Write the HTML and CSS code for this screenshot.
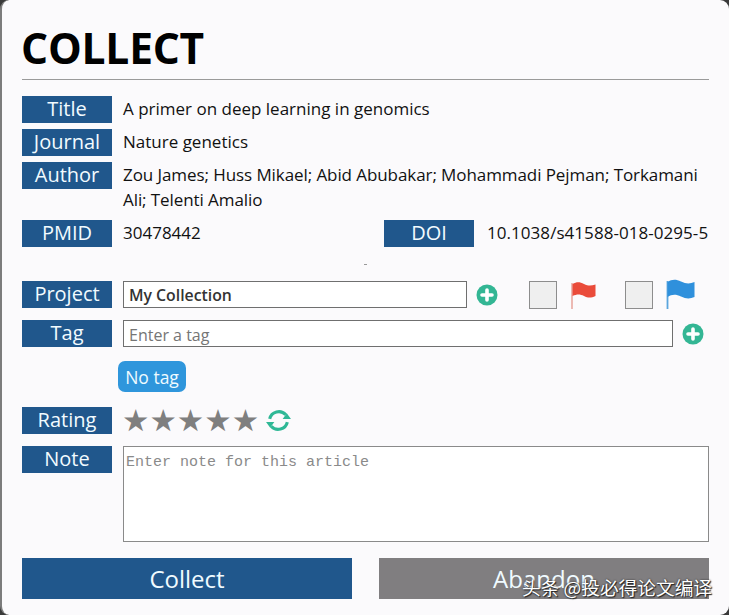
FILE: index.html
```html
<!DOCTYPE html>
<html lang="en">
<head>
<meta charset="utf-8">
<title>Collect</title>
<link rel="stylesheet" href="styles.css">
</head>
<body>
<main class="panel">
  <h1 class="heading">COLLECT</h1>
  <hr class="rule">
  <div class="row row-first"><span class="label">Title</span><span class="value">A primer on deep learning in genomics</span></div>
  <div class="row"><span class="label">Journal</span><span class="value">Nature genetics</span></div>
  <div class="row"><span class="label">Author</span><span class="value value-wrap">Zou James; Huss Mikael; Abid Abubakar; Mohammadi Pejman; Torkamani Ali; Telenti Amalio</span></div>
  <div class="row row-ids">
    <span class="label">PMID</span><span class="value value-pmid">30478442</span>
    <span class="label">DOI</span><span class="value value-doi">10.1038/s41588-018-0295-5</span>
  </div>
  <span class="speck"></span>
  <div class="row row-project">
    <span class="label">Project</span>
    <div class="select-box">My Collection</div>
    <svg class="plus" viewBox="0 0 22 22"><circle cx="11" cy="11" r="10.5" fill="#33b694"/><path d="M11 6v10M6 11h10" stroke="#fff" stroke-width="3.6" stroke-linecap="round"/></svg>
    <span class="check check-red"></span>
    <svg class="flag flag-red" viewBox="0 0 26 28"><path d="M1 2v26" stroke="#e9a9a0" stroke-width="1.6"/><path d="M1.5 3C6 .5 9 1 13 3s7 2 11.5 .5V15C20 17 17 17 13 15s-7-2-11.500 0z" fill="#ea4b3a"/></svg>
    <span class="check check-blue"></span>
    <svg class="flag flag-blue" viewBox="0 0 30 30"><path d="M1.500 2v28" stroke="#5aa5dd" stroke-width="1.800"/><path d="M1.500 3C6 0 10 0 15 2.500s9 2.500 13.500 .5V18C24 20 20 20 15 17.500S6 15 1.500 18z" fill="#2f90dc"/></svg>
  </div>
  <div class="row row-tag">
    <span class="label">Tag</span>
    <div class="tag-box">Enter a tag</div>
    <svg class="plus" viewBox="0 0 22 22"><circle cx="11" cy="11" r="10.500" fill="#33b694"/><path d="M11 6v10M6 11h10" stroke="#fff" stroke-width="3.600" stroke-linecap="round"/></svg>
  </div>
  <div class="chip-row"><span class="chip">No tag</span></div>
  <div class="row row-rating">
    <span class="label">Rating</span>
    <span class="stars">★★★★★</span>
    <svg class="refresh" viewBox="0 0 26 26" fill="none"><path d="M4.500 11.500A9 9 0 0 1 20 7.500" stroke="#2fb896" stroke-width="3"/><path d="M21.500 14.500A9 9 0 0 1 6 18.500" stroke="#2fb896" stroke-width="3"/><path d="M17 11.500h8l-4-5.500zM1 14.500h8l-4 5.500z" fill="#2fb896"/></svg>
  </div>
  <div class="row row-note">
    <span class="label">Note</span>
    <div class="note-box">Enter note for this article</div>
  </div>
  <div class="actions">
    <button class="action action-collect">Collect</button>
    <button class="action action-abandon">Abandon</button>
  </div>
  <span class="watermark">头条 @投必得论文编译</span>
</main>
</body>
</html>
```

FILE: styles.css
```css
* { box-sizing: border-box; }
html, body { margin: 0; height: 100%; background: #3a3a3a; }
body { overflow: hidden; }

.panel {
  position: relative;
  width: 729px;
  height: 615px;
  padding: 0 20px 0 20px;
  background: #fbfafc;
  border-left: 2px solid #7c7c7c;
  border-radius: 9px;
  font-family: "Open Sans", "Noto Sans", sans-serif;
  color: #111;
  overflow: hidden;
}

.heading {
  margin: 0 0 0 -1px;
  padding-top: 19px;
  height: 79px;
  font-size: 42.500px;
  line-height: 58px;
  font-weight: 700;
  color: #000;
  letter-spacing: -0.2px;
}

.rule {
  margin: 0;
  height: 1px;
  border: 0;
  background: #9a9a9a;
}

.row { display: flex; align-items: flex-start; margin-top: 6px; }
.row-first { margin-top: 16px; }
.row-ids { margin-top: 8px; }
.row-project { margin-top: 34px; align-items: center; height: 27px; }
.row-tag { margin-top: 12px; align-items: center; height: 27px; }
.row-rating { margin-top: 15px; align-items: center; height: 27px; }
.row-note { margin-top: 12px; }

.label {
  flex: none;
  width: 90px;
  height: 27px;
  background: #20578c;
  color: #f2fbff;
  font-size: 20px;
  line-height: 26px;
  text-align: center;
}

.value {
  margin-left: 11px;
  font-size: 17px;
  line-height: 25px;
  white-space: nowrap;
}
.value-wrap { white-space: normal; width: 585px; letter-spacing: -0.08px; }
.value-pmid { width: 261px; }
.value-doi { margin-left: 13px; letter-spacing: 0.05px; }

.speck {
  position: absolute;
  left: 362px;
  top: 264px;
  width: 3px;
  height: 1px;
  background: #999;
}

.select-box, .tag-box {
  height: 27px;
  margin-left: 11px;
  background: #fff;
  border: 1px solid #6f6f6f;
  padding-left: 5px;
  font-size: 16px;
  line-height: 27px;
}
.select-box { width: 344px; font-weight: 600; font-size: 15.800px; color: #333; }
.tag-box { width: 550px; color: #757575; line-height: 28px; }

.plus { flex: none; width: 22px; height: 22px; }
.row-project .plus { margin-left: 9px; }
.row-tag .plus { margin-left: 9px; }

.check {
  flex: none;
  width: 28px;
  height: 28px;
  background: #efefef;
  border: 1px solid #8d8d8d;
}
.check-red { margin-left: 31px; }
.check-blue { margin-left: 28px; }
.flag-red { flex: none; width: 26px; height: 28px; margin-left: 14px; }
.flag-blue { flex: none; width: 30px; height: 30px; margin-left: 13px; margin-top: -2px; }

.chip-row { margin-top: 14px; padding-left: 96px; height: 31px; }
.chip {
  display: block;
  width: 68px;
  height: 31px;
  background: #2f96dc;
  color: #f0fbff;
  border-radius: 7px;
  font-size: 17.500px;
  line-height: 33px;
  text-align: center;
}

.stars {
  margin-left: 10px;
  width: 136px;
  font-family: "DejaVu Sans", sans-serif;
  font-size: 30.600px;
  line-height: 27px;
  color: #7f7f7f;
  white-space: nowrap;
}
.refresh { flex: none; width: 27px; height: 27px; margin-left: 7px; }

.note-box {
  margin-left: 11px;
  width: 586px;
  height: 96px;
  background: #fff;
  border: 1px solid #8a8a8a;
  padding: 6px 2px;
  font-family: "Liberation Mono", monospace;
  font-size: 15px;
  line-height: 20px;
  color: #8a8a8a;
}

.actions { display: flex; gap: 27px; margin-top: 16px; }
.action {
  flex: none;
  width: 330px;
  height: 41px;
  border: 0;
  padding: 0;
  color: #f0fbff;
  font-family: inherit;
  font-size: 24px;
  line-height: 41px;
}
.action-collect { background: #20578c; }
.action-abandon { background: #807e80; }

.watermark {
  position: absolute;
  left: 520px;
  top: 574px;
  font-family: "Noto Sans CJK SC", sans-serif;
  font-size: 18.700px;
  line-height: 26px;
  color: #fff;
  white-space: nowrap;
  text-shadow: 0 0 2px #222, 1px 1px 1px #222;
}
```
